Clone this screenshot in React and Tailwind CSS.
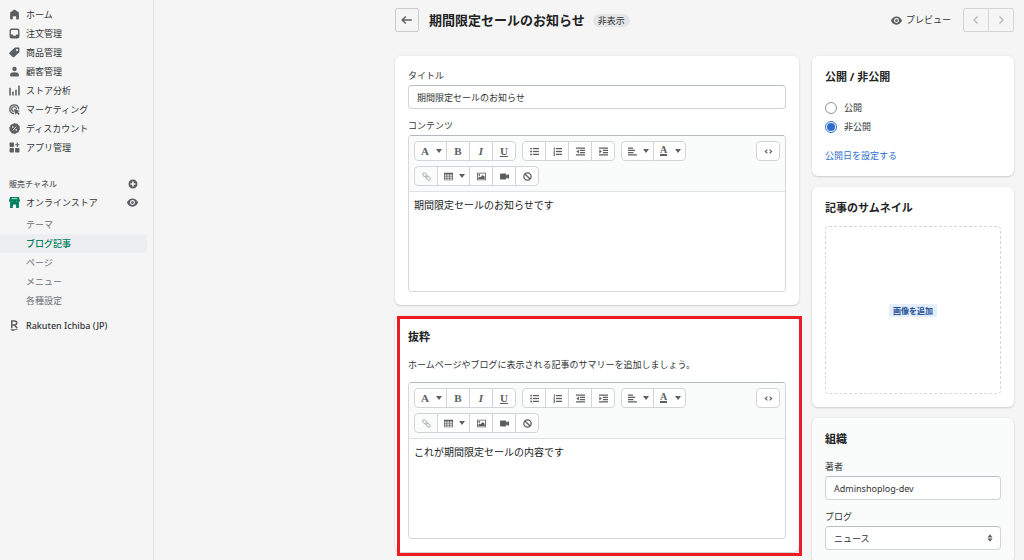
import React from "react";

const HOME =
  "M18 7.261V17.5c0 .841-.672 1.5-1.5 1.5h-2c-.828 0-1.5-.659-1.5-1.5V13H7v4.477C7 18.318 6.328 19 5.5 19h-2c-.828 0-1.5-.682-1.5-1.523V7.261a1.5 1.5 0 01.615-1.21l6.59-4.82a1.481 1.481 0 011.59 0l6.59 4.82A1.5 1.5 0 0118 7.261z";
const ORDERS =
  "M4.5 1h11A3.5 3.5 0 0119 4.500v11a3.500 3.500 0 01-3.500 3.500h-11A3.500 3.500 0 011 15.500v-11A3.500 3.500 0 014.500 1zM5 3.500A1.500 1.500 0 003.500 5v7h3.200l1.300 2h4l1.300-2h3.200V5A1.500 1.500 0 0015 3.500z";
const TAG =
  "M18 1h-7a2 2 0 00-1.400.600l-8.500 8.500a2 2 0 000 2.800l5.500 5.500a2 2 0 002.800 0l9-8.500a2 2 0 00.600-1.400v-6.500a1 1 0 00-1-1zM14.500 7.500a2 2 0 110-4 2 2 0 010 4z";
const EYE =
  "M19.928 9.628C19.800 9.300 17 2.500 10 2.500S.200 9.300.072 9.628a1.017 1.017 0 000 .744C.200 10.700 3 17.500 10 17.500s9.800-6.800 9.928-7.128a1.017 1.017 0 000-.744zM10 14.500a4.500 4.500 0 110-9 4.500 4.500 0 010 9zm0-7a2.500 2.500 0 100 5 2.500 2.500 0 000-5z";

function Glyph({ children, className = "size-[11px]", box = "0 0 20 20" }) {
  return (
    <svg viewBox={box} className={className + " shrink-0"} fill="currentColor" aria-hidden="true">
      {children}
    </svg>
  );
}

const evenOdd = (d) => <path fillRule="evenodd" clipRule="evenodd" d={d} />;

const NAV = [
  { label: "ホーム", icon: <path d={HOME} /> },
  { label: "注文管理", icon: evenOdd(ORDERS) },
  { label: "商品管理", icon: evenOdd(TAG) },
  {
    label: "顧客管理",
    icon: (
      <>
        <circle cx="10" cy="5.500" r="4" />
        <path d="M2 16c0-3 3-4.500 8-4.500s8 1.500 8 4.500v1.500a1.500 1.500 0 01-1.500 1.500h-13A1.500 1.500 0 012 17.500z" />
      </>
    ),
  },
  {
    label: "ストア分析",
    icon: (
      <>
        <rect x="0.500" y="5" width="2.800" height="14" rx="1" />
        <rect x="5.800" y="12" width="2.800" height="7" rx="1" />
        <rect x="11.300" y="8" width="2.800" height="11" rx="1" />
        <rect x="16.700" y="1" width="2.800" height="18" rx="1" />
      </>
    ),
  },
  {
    label: "マーケティング",
    icon: (
      <>
        <path
          d="M17.500 8.500A8 8 0 108 17.300M13.500 8.500A4.300 4.300 0 108 13.200"
          fill="none"
          stroke="currentColor"
          strokeWidth="2.400"
          strokeLinecap="round"
        />
        <path d="M8.500 8.500l11.500 4-4 1.800 3.500 3.700-2 2-3.600-3.600L12 20z" />
      </>
    ),
  },
  {
    label: "ディスカウント",
    icon: (
      <>
        <path d="M10 0l2.600 1.200 3.200 0 1.100 2.500 2.700 2-.300 3.200 .700 3-2 2.200-.700 3-3.200.700L11.500 20l-3-.900-3.200.100-1.500-2.800L.900 14.300l.300-3.100L.200 8.200l2.200-2.300.700-3 3.200-.700z" />
        <path d="M7 13.500l6-7" stroke="#f5f5f5" strokeWidth="1.500" />
        <circle cx="7" cy="7.500" r="1.400" fill="#f5f5f5" />
        <circle cx="13" cy="12.500" r="1.400" fill="#f5f5f5" />
      </>
    ),
  },
  {
    label: "アプリ管理",
    icon: (
      <>
        <rect x="1" y="1" width="8" height="8" rx="1.500" />
        <rect x="1" y="11" width="8" height="8" rx="1.500" />
        <rect x="11" y="11" width="8" height="8" rx="1.500" />
        <path d="M14 1h2v3h3v2h-3v3h-2V6h-3V4h3z" />
      </>
    ),
  },
];

const CHANNEL_PAGES = ["テーマ", "ブログ記事", "ページ", "メニュー", "各種設定"];

function Sidebar() {
  return (
    <nav className="w-[154px] shrink-0 border-r border-[#e4e5e7] pt-[5px] text-[9px] text-[#303436]">
      <ul>
        {NAV.map((item) => (
          <li key={item.label}>
            <a href="#" className="flex h-[19px] items-center gap-1.5 pl-[9px]">
              <span className="flex text-[#5c5f62]">
                <Glyph>{item.icon}</Glyph>
              </span>
              {item.label}
            </a>
          </li>
        ))}
      </ul>

      <div className="mt-[17px] flex h-[19px] items-center justify-between pr-[15px] pl-[9px] text-[8px] text-[#5c5f62]">
        <h2 className="font-medium">販売チャネル</h2>
        <button type="button" aria-label="販売チャネルを追加" className="flex">
          <Glyph className="size-2.5">
            {evenOdd(
              "M10 1a9 9 0 100 18 9 9 0 000-18zM8.500 5h3v3.500H15v3h-3.500V15h-3v-3.500H5v-3h3.500z"
            )}
          </Glyph>
        </button>
      </div>

      <div className="flex h-[19px] items-center justify-between pr-[15px] pl-[9px]">
        <a href="#" className="flex items-center gap-1.5">
          <span className="flex text-[#008060]">
            <Glyph>
              <path d="M2 0h16l2 6.500c0 1.800-1.300 3-2.900 3S14 8.300 14 7c0 1.400-1.700 2.500-4 2.500S6 8.400 6 7c0 1.300-1.500 2.500-3.100 2.500S0 8.300 0 6.500z" />
              <path d="M2 8h16v12h-5v-4a3 3 0 00-6 0v4H2z" />
              <path d="M5 3h10" stroke="#f5f5f5" strokeWidth="1.400" />
            </Glyph>
          </span>
          オンラインストア
        </a>
        <a href="#" aria-label="オンラインストアを表示" className="flex text-[#5c5f62]">
          <Glyph>{evenOdd(EYE)}</Glyph>
        </a>
      </div>

      <ul className="pt-[3px] pr-1.5 text-[#6d7175]">
        {CHANNEL_PAGES.map((label) => (
          <li key={label}>
            {label === "ブログ記事" ? (
              <a
                href="#"
                aria-current="page"
                className="flex h-[19px] items-center rounded-r-sm bg-[#edeeef] pl-[26px] font-medium text-[#008060]"
              >
                {label}
              </a>
            ) : (
              <a href="#" className="flex h-[19px] items-center pl-[26px]">
                {label}
              </a>
            )}
          </li>
        ))}
      </ul>

      <a href="#" className="mt-1.5 flex h-[19px] items-center gap-1.5 pl-[9px] font-medium">
        <span className="flex text-[#5c5f62]">
          <Glyph>
            <path
              d="M5 15V2h5.500a3.500 3.500 0 010 7H5M10 9l5 6"
              fill="none"
              stroke="currentColor"
              strokeWidth="2.800"
            />
            <path d="M2 17h16l-12 3z" />
          </Glyph>
        </span>
        Rakuten Ichiba (JP)
      </a>
    </nav>
  );
}

const listLines = (
  <>
    <rect x="4.500" y="1.500" width="9.500" height="2" />
    <rect x="4.500" y="6" width="9.500" height="2" />
    <rect x="4.500" y="10.500" width="9.500" height="2" />
  </>
);

const TOOL_ICONS = {
  bullets: (
    <>
      <circle cx="1.700" cy="2.500" r="1.500" />
      <circle cx="1.700" cy="7" r="1.500" />
      <circle cx="1.700" cy="11.500" r="1.500" />
      {listLines}
    </>
  ),
  numbers: (
    <>
      <path d="M1.300 .500h1.400v4H1.300zM.600 5.300h2.600v1.500L2 8h1.200v1H.600V7.700L2 6.400H.600zM.600 9.800h2.600v3.700H.600v-1h1.200v-.500H1v-.800h1v-.500H.600z" />
      {listLines}
    </>
  ),
  outdent: (
    <path d="M0 .800h14v2H0zM6 4.300h8v2H6zM6 7.700h8v2H6zM0 11.200h14v2H0zM4.500 4v6L.500 7z" />
  ),
  indent: (
    <path d="M0 .800h14v2H0zM6 4.300h8v2H6zM6 7.700h8v2H6zM0 11.200h14v2H0zM.500 4v6l4-3z" />
  ),
  align: <path d="M0 .800h8v2H0zM0 4.200h11v2H0zM0 7.700h8.500v2H0zM0 11.200h14v2H0z" />,
  link: (
    <g fill="none" stroke="currentColor" strokeWidth="1.700">
      <rect x="0.800" y="2.200" width="7" height="4.400" rx="2.200" transform="rotate(45 4.300 4.400)" />
      <rect x="6.200" y="7.400" width="7" height="4.400" rx="2.200" transform="rotate(45 9.700 9.600)" />
      <path d="M5.500 5.500l3 3" />
    </g>
  ),
  table: (
    <path
      fillRule="evenodd"
      d="M0 1h14v12H0zM1.200 3.800v2h2.700v-2zm3.900 0v2h3.200v-2zm4.400 0v2h3.300v-2zM1.200 7v2h2.700V7zm3.900 0v2h3.200V7zm4.400 0v2h3.300V7zM1.200 10v2h2.700v-2zm3.900 0v2h3.200v-2zm4.400 0v2h3.300v-2z"
    />
  ),
  image: (
    <path
      fillRule="evenodd"
      d="M0 1h14v12H0zM1.300 2.300v9.400h11.400V2.300zM3.500 3.200a1.400 1.400 0 110 2.800 1.400 1.400 0 010-2.800zM2 11V9l2-2 1.300 1.300L9 4.500l3 3V11z"
    />
  ),
  video: (
    <path d="M1.500 2.500h7A1.500 1.500 0 0110 4v1.500l4-2.500v8l-4-2.500V10a1.500 1.500 0 01-1.500 1.500h-7A1.500 1.500 0 010 10V4a1.500 1.500 0 011.500-1.500z" />
  ),
  clear: (
    <g fill="none" stroke="currentColor" strokeWidth="2">
      <circle cx="7" cy="7" r="5.700" />
      <path d="M3 3l8 8" />
    </g>
  ),
  code: (
    <path
      d="M5.300 4L2 7l3.300 3M8.700 4L12 7l-3.300 3"
      fill="none"
      stroke="currentColor"
      strokeWidth="1.800"
    />
  ),
};

function ToolIcon({ name }) {
  return (
    <Glyph box="0 0 14 14" className="size-[9px]">
      {TOOL_ICONS[name]}
    </Glyph>
  );
}

function Tool({ label, menu, disabled, children }) {
  const width = menu ? "w-[33px] justify-between pr-1 pl-1.5" : "w-6 justify-center";
  const tone = disabled ? "bg-[#fafbfb] text-[#b5babd]" : "bg-white text-[#5c5f62]";
  return (
    <button
      type="button"
      aria-label={label}
      disabled={disabled}
      className={
        "-ml-px flex h-5 items-center border border-[#d2d5d8] font-['Liberation_Serif',serif] text-[11px] leading-3 font-bold first:ml-0 first:rounded-l-sm last:rounded-r-sm " +
        width +
        " " +
        tone
      }
    >
      {children}
      {menu && (
        <Glyph box="0 0 6 4" className="h-1 w-1.5">
          <path d="M0 0h6L3 4z" />
        </Glyph>
      )}
    </button>
  );
}

function Editor({ label, text }) {
  return (
    <div className="flex h-[157px] flex-col overflow-hidden rounded-sm border border-[#d5d8da] border-t-[#b4b9bd]">
      <div className="flex items-start justify-between border-b border-[#dfe1e3] bg-[#fafbfb] p-[5px]">
        <div className="flex flex-col gap-[5px]">
          <div className="flex gap-1.5">
            <div className="flex">
              <Tool label="書式" menu>A</Tool>
              <Tool label="太字">B</Tool>
              <Tool label="斜体"><span className="italic">I</span></Tool>
              <Tool label="下線"><span className="underline">U</span></Tool>
            </div>
            <div className="flex">
              <Tool label="箇条書き"><ToolIcon name="bullets" /></Tool>
              <Tool label="番号付きリスト"><ToolIcon name="numbers" /></Tool>
              <Tool label="インデントを減らす"><ToolIcon name="outdent" /></Tool>
              <Tool label="インデントを増やす"><ToolIcon name="indent" /></Tool>
            </div>
            <div className="flex">
              <Tool label="配置" menu><ToolIcon name="align" /></Tool>
              <Tool label="文字色" menu>
                <span className="border-b-2 text-[10px] leading-2">A</span>
              </Tool>
            </div>
          </div>
          <div className="flex">
            <Tool label="リンク" disabled><ToolIcon name="link" /></Tool>
            <Tool label="表" menu><ToolIcon name="table" /></Tool>
            <Tool label="画像"><ToolIcon name="image" /></Tool>
            <Tool label="動画"><ToolIcon name="video" /></Tool>
            <Tool label="書式をクリア"><ToolIcon name="clear" /></Tool>
          </div>
        </div>
        <div className="flex">
          <Tool label="HTMLを表示"><ToolIcon name="code" /></Tool>
        </div>
      </div>
      <textarea
        aria-label={label}
        defaultValue={text}
        className="w-full flex-1 resize-none bg-white px-[5px] py-1.5 text-[10px] leading-[14px] text-[#202223] outline-none"
      />
    </div>
  );
}

function Card({ title, subdued, children }) {
  return (
    <section
      className={
        "relative shrink-0 rounded-md p-[13px] shadow-[0_0_3px_rgba(23,24,24,0.06),0_1px_2px_rgba(0,0,0,0.14)] " +
        (subdued ? "bg-[#fafbfb]" : "bg-white")
      }
    >
      {title && <h2 className="text-[11px] leading-4 font-bold text-[#202223]">{title}</h2>}
      {children}
    </section>
  );
}

const FIELD =
  "h-6 w-full rounded-sm border border-[#d0d4d7] border-t-[#babfc3] bg-white px-2 text-[9px] text-[#303436] outline-none";

function Header() {
  return (
    <header className="flex h-6 shrink-0 items-center">
      <a
        href="#"
        aria-label="戻る"
        className="flex size-6 items-center justify-center rounded-xs border border-[#c9cccf] text-[#5c5f62]"
      >
        <Glyph className="size-3">
          <path
            d="M18 10H2.500M8 4l-6 6 6 6"
            fill="none"
            stroke="currentColor"
            strokeWidth="2.400"
          />
        </Glyph>
      </a>
      <h1 className="ml-2.5 text-[13px] leading-5 font-bold text-[#202223]">期間限定セールのお知らせ</h1>
      <span className="ml-2 rounded-full bg-[#e4e5e7] px-[5px] text-[9px] leading-[13px]">
        非表示
      </span>
      <a href="#" className="ml-auto flex items-center gap-1 text-[9px]">
        <span className="flex text-[#5c5f62]">
          <Glyph>{evenOdd(EYE)}</Glyph>
        </span>
        プレビュー
      </a>
      <div className="ml-3 flex text-[#b5b9bc]">
        <button
          type="button"
          disabled
          aria-label="前の記事"
          className="flex h-6 w-[26px] items-center justify-center rounded-l-xs border border-[#d2d5d8]"
        >
          <Glyph className="size-2.5">
            <path d="M13 3l-7 7 7 7" fill="none" stroke="currentColor" strokeWidth="2.800" />
          </Glyph>
        </button>
        <button
          type="button"
          disabled
          aria-label="次の記事"
          className="-ml-px flex h-6 w-[26px] items-center justify-center rounded-r-xs border border-[#d2d5d8]"
        >
          <Glyph className="size-2.5">
            <path d="M7 3l7 7-7 7" fill="none" stroke="currentColor" strokeWidth="2.800" />
          </Glyph>
        </button>
      </div>
    </header>
  );
}

const RADIO =
  "size-3 appearance-none rounded-full border border-[#8c9196] bg-white checked:border-[#2c6ecb] checked:bg-[#2c6ecb] checked:bg-clip-content checked:p-px";

export default function App() {
  return (
    <div className="flex h-screen overflow-hidden bg-[#f5f5f5] font-['Noto_Sans','Noto_Sans_CJK_JP',sans-serif] text-[#303436]">
      <Sidebar />
      <main className="flex min-w-0 flex-1 flex-col gap-6 pt-2 pr-2.5 pl-[241px]">
        <Header />
        <div className="grid grid-cols-[2fr_1fr] items-start gap-[13px] text-[9px] leading-[13px]">
          <div className="flex min-w-0 flex-col gap-[11px]">
            <Card>
              <label htmlFor="title" className="block">タイトル</label>
              <input
                id="title"
                type="text"
                defaultValue="期間限定セールのお知らせ"
                className={FIELD + " mt-[3px]"}
              />
              <p className="mt-2.5 mb-[3px]">コンテンツ</p>
              <Editor label="コンテンツ" text="期間限定セールのお知らせです" />
            </Card>
            <Card title="抜粋">
              <p className="mt-[13px] mb-[11px]">
                ホームページやブログに表示される記事のサマリーを追加しましょう。
              </p>
              <Editor label="抜粋" text="これが期間限定セールの内容です" />
              <div className="pointer-events-none absolute top-0 -right-[3px] -bottom-1 left-0.5 border-3 border-[#ed1c24]" />
            </Card>
          </div>

          <div className="flex min-w-0 flex-col gap-[11px]">
            <Card title="公開 / 非公開">
              <div className="mt-4 flex flex-col gap-1.5">
                <label className="flex items-center gap-[7px]">
                  <input type="radio" name="visibility" className={RADIO} />
                  公開
                </label>
                <label className="flex items-center gap-[7px]">
                  <input type="radio" name="visibility" defaultChecked className={RADIO} />
                  非公開
                </label>
              </div>
              <a href="#" className="mt-4 block leading-[14px] text-[#2c6ecb]">
                公開日を設定する
              </a>
            </Card>

            <Card title="記事のサムネイル">
              <div className="mt-2.5 flex h-[168px] items-center justify-center rounded-sm border border-dashed border-[#d5d8da]">
                <button
                  type="button"
                  className="rounded-xs bg-[#e3edfb] px-1 text-[8px] leading-[13px] font-bold text-[#1f5199]"
                >
                  画像を追加
                </button>
              </div>
            </Card>

            <Card title="組織" subdued>
              <label htmlFor="author" className="mt-[13px] block">著者</label>
              <input
                id="author"
                type="text"
                defaultValue="Adminshoplog-dev"
                className={FIELD + " mt-[3px]"}
              />
              <label htmlFor="blog" className="mt-2.5 block">ブログ</label>
              <div className="relative mt-[3px]">
                <select id="blog" defaultValue="news" className={FIELD + " appearance-none"}>
                  <option value="news">ニュース</option>
                </select>
                <span className="pointer-events-none absolute inset-y-0 right-2 flex items-center text-[#5c5f62]">
                  <Glyph box="0 0 6 8" className="h-2 w-1.5">
                    <path d="M.500 3.500h5L3 .300zM.500 4.500h5L3 7.700z" />
                  </Glyph>
                </span>
              </div>
            </Card>
          </div>
        </div>
      </main>
    </div>
  );
}
